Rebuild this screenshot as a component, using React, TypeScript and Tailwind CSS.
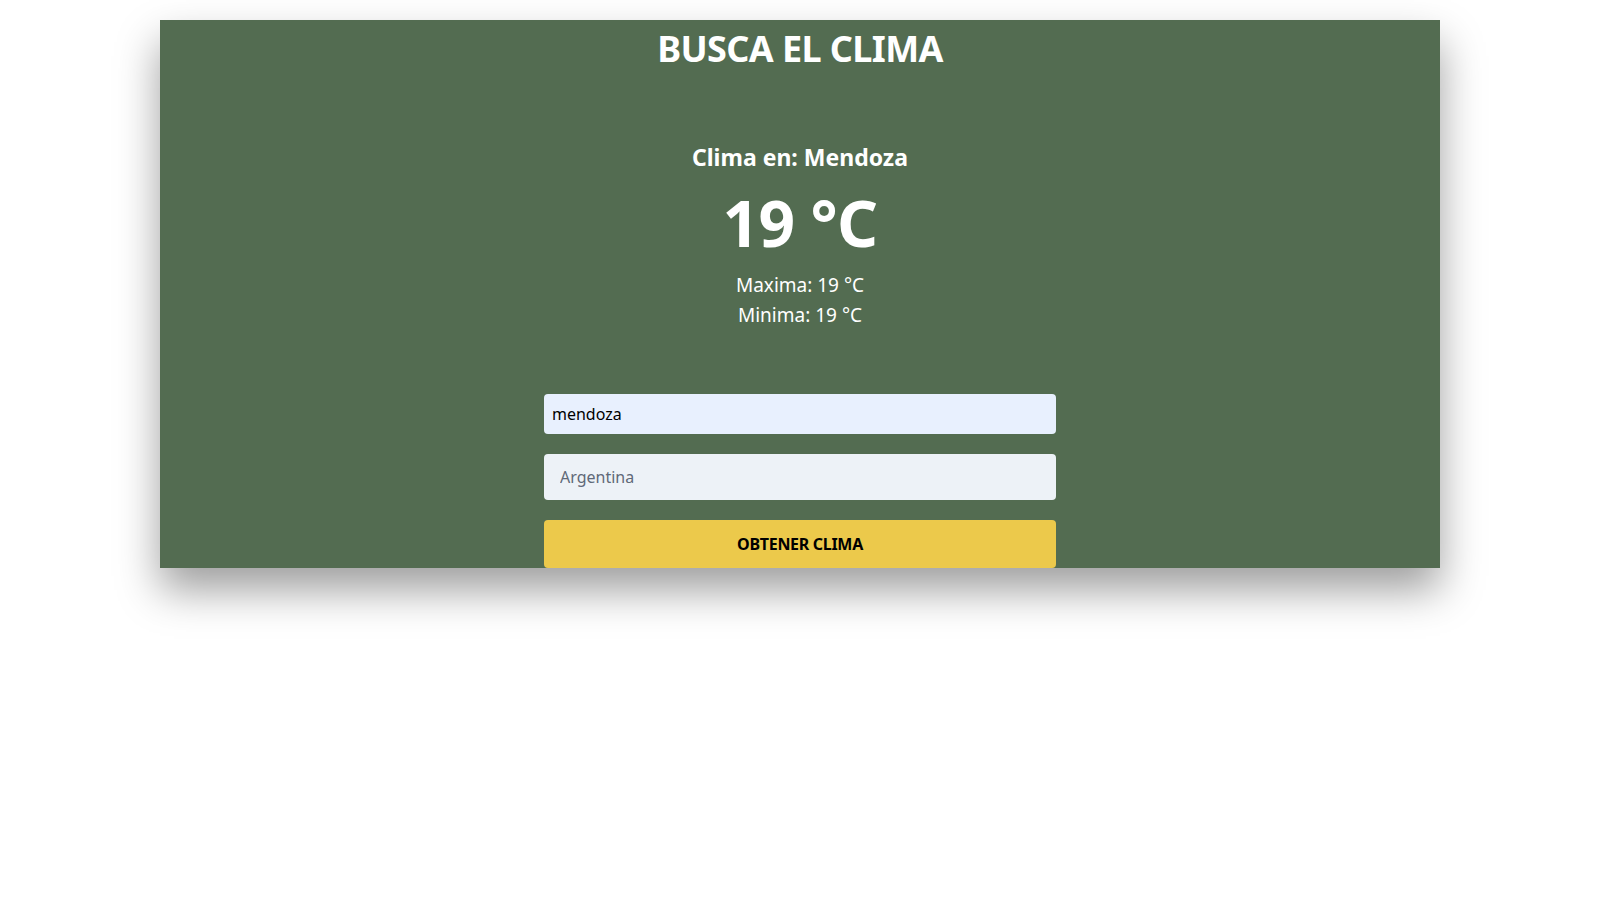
import { useState } from "react";

export default function App() {
  const [city, setCity] = useState("mendoza");
  const [country, setCountry] = useState("");

  return (
    <div
      className="min-h-screen bg-white"
      style={{ fontFamily: '"Noto Sans", "Open Sans", sans-serif' }}
    >
      <div className="mx-auto mt-5 w-[1280px] h-[548px] overflow-hidden bg-[#536c51] shadow-[0_22px_40px_rgba(0,0,0,0.38)] text-white text-center">
        <h1 className="pt-[11px] text-[36px] font-bold leading-none tracking-[-0.6px]">BUSCA EL CLIMA</h1>

        <div className="mt-[79px]">
          <h2 className="text-[23px] font-bold leading-none">Clima en: Mendoza</h2>
          <p className="mt-[22px] text-[64px] font-bold leading-none tracking-[-0.6px]">19 °C</p>
          <p className="mt-[15px] text-[19px] leading-[30px]">Maxima: 19 °C</p>
          <p className="text-[19px] leading-[30px]">Minima: 19 °C</p>
        </div>

        <form
          className="mx-auto mt-[64px] flex w-[512px] flex-col gap-5"
          onSubmit={(e) => e.preventDefault()}
        >
          <input
            type="text"
            value={city}
            onChange={(e) => setCity(e.target.value)}
            className="h-10 w-full rounded bg-[#e8f0fe] px-2 text-[16px] text-black outline-none"
          />
          <input
            type="text"
            value={country}
            placeholder="Argentina"
            onChange={(e) => setCountry(e.target.value)}
            className="h-[46px] w-full rounded bg-[#edf2f7] px-4 text-[16px] text-gray-700 placeholder:text-[#5f6978] outline-none"
          />
          <button
            type="submit"
            className="h-12 w-full rounded bg-[#ecc94b] text-[16px] font-bold uppercase tracking-[-0.3px] text-black"
          >
            Obtener clima
          </button>
        </form>
      </div>
    </div>
  );
}
